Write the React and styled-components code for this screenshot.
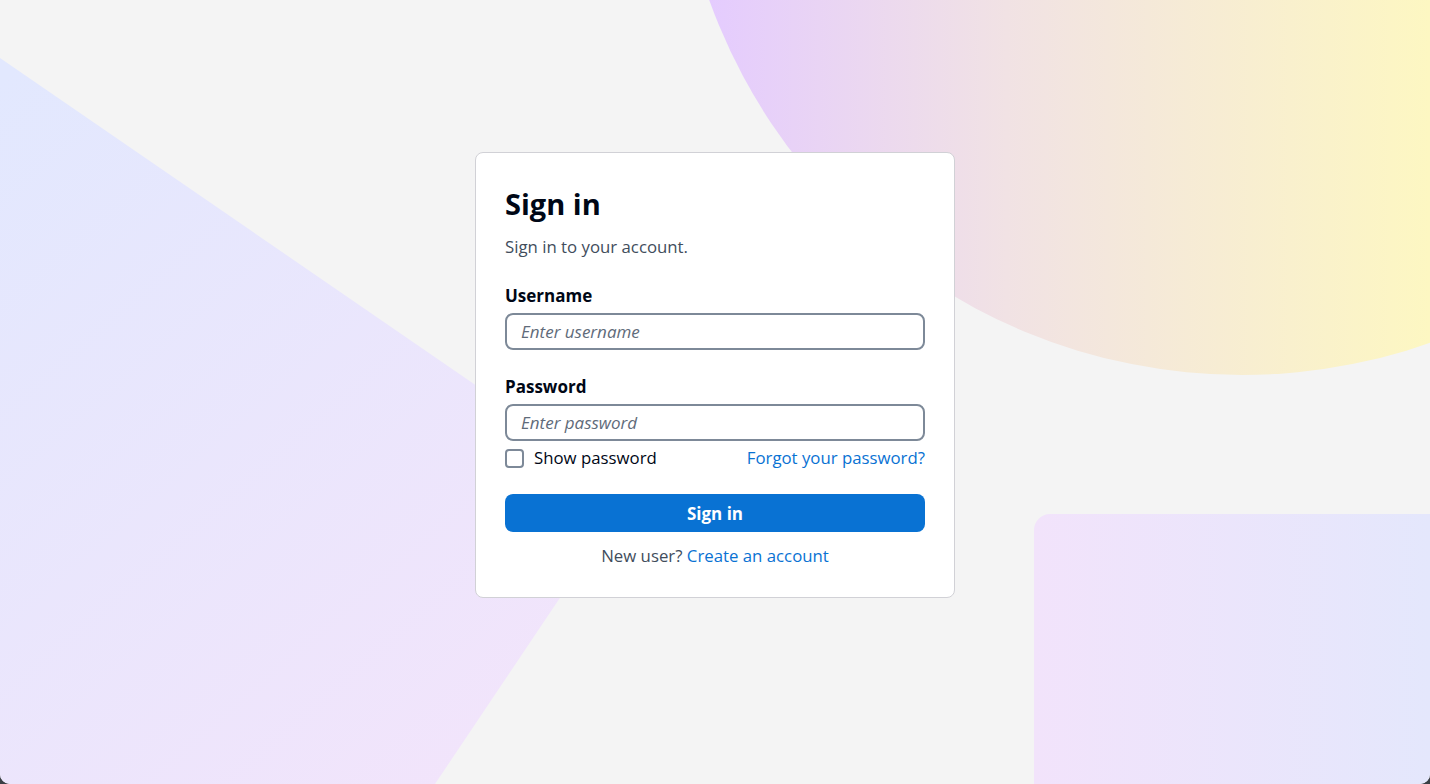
import styled, { createGlobalStyle } from "styled-components";

const GlobalStyle = createGlobalStyle`
  * { box-sizing: border-box; }
  body {
    margin: 0;
    background: #3a3f45;
    font-family: "Open Sans", "Noto Sans", sans-serif;
  }
`;

const Page = styled.div`
  position: relative;
  width: 1430px;
  height: 784px;
  overflow: hidden;
  background: #f4f4f4;
  border-radius: 0 0 10px 10px;
`;

const Backdrop = styled.svg`
  position: absolute;
  inset: 0;
  width: 100%;
  height: 100%;
`;

const Content = styled.main`
  position: relative;
  display: flex;
  justify-content: center;
  padding-top: 152px;
`;

const Card = styled.form`
  width: 480px;
  padding: 33px 29px 29px;
  background: #ffffff;
  border: 1px solid #d1d1d6;
  border-radius: 8px;
  display: flex;
  flex-direction: column;
`;

const Title = styled.h1`
  margin: 0;
  font-size: 29px;
  line-height: 36px;
  font-weight: 700;
  color: #000716;
`;

const Subtitle = styled.p`
  margin: 13px 0 0;
  font-size: 16.8px;
  line-height: 24px;
  color: #414d5c;
`;

const Field = styled.div`
  display: flex;
  flex-direction: column;
  gap: 5px;
  margin-top: ${(p) => p.$top}px;
`;

const Label = styled.label`
  font-size: 17px;
  line-height: 24px;
  font-weight: 700;
  color: #000716;
`;

const Input = styled.input`
  height: 37px;
  width: 100%;
  padding: 0 14px;
  border: 2px solid #7d8998;
  border-radius: 8px;
  font-family: inherit;
  font-size: 17px;
  color: #000716;
  outline: none;

  &::placeholder {
    font-style: italic;
    color: #5f6b7a;
  }
`;

const OptionsRow = styled.div`
  display: flex;
  align-items: center;
  justify-content: space-between;
  margin-top: 5px;
  font-size: 16.8px;
  line-height: 24px;
`;

const CheckLabel = styled.label`
  display: flex;
  align-items: center;
  gap: 10px;
  color: #000716;
`;

const Checkbox = styled.input`
  appearance: none;
  margin: 0;
  width: 19px;
  height: 19px;
  border: 2px solid #7d8998;
  border-radius: 4px;
  background: #fff;
`;

const Link = styled.a`
  color: #0972d3;
  text-decoration: none;
`;

const SubmitButton = styled.button`
  margin-top: 24px;
  height: 38px;
  width: 100%;
  border: none;
  border-radius: 8px;
  background: #0972d3;
  color: #ffffff;
  font-family: inherit;
  font-size: 17px;
  font-weight: 700;
`;

const Footer = styled.p`
  margin: 12px 0 0;
  text-align: center;
  font-size: 16.8px;
  line-height: 24px;
  color: #414d5c;
`;

export default function App() {
  return (
    <>
      <GlobalStyle />
      <Page>
        <Backdrop viewBox="0 0 1430 784" preserveAspectRatio="none">
          <defs>
            <linearGradient id="sun" gradientUnits="userSpaceOnUse" x1="700" y1="0" x2="1430" y2="0">
              <stop offset="0" stopColor="#e4cbff" />
              <stop offset="0.42" stopColor="#f1e2e4" />
              <stop offset="1" stopColor="#fdf7c2" />
            </linearGradient>
            <linearGradient id="wedge" gradientUnits="userSpaceOnUse" x1="0" y1="80" x2="560" y2="720">
              <stop offset="0" stopColor="#e2e8fe" />
              <stop offset="1" stopColor="#f2e4fb" />
            </linearGradient>
            <linearGradient id="tile" gradientUnits="userSpaceOnUse" x1="1034" y1="0" x2="1430" y2="0">
              <stop offset="0" stopColor="#f2e3fb" />
              <stop offset="1" stopColor="#e4e7fc" />
            </linearGradient>
          </defs>
          <circle cx="1242" cy="-191" r="566" fill="url(#sun)" />
          <polygon points="0,58 631,492 435,784 0,784" fill="url(#wedge)" />
          <rect x="1034" y="514" width="440" height="320" rx="16" fill="url(#tile)" />
        </Backdrop>
        <Content>
          <Card onSubmit={(e) => e.preventDefault()}>
            <Title>Sign in</Title>
            <Subtitle>Sign in to your account.</Subtitle>
            <Field $top={25}>
              <Label htmlFor="username">Username</Label>
              <Input id="username" placeholder="Enter username" />
            </Field>
            <Field $top={25}>
              <Label htmlFor="password">Password</Label>
              <Input id="password" type="password" placeholder="Enter password" />
            </Field>
            <OptionsRow>
              <CheckLabel>
                <Checkbox type="checkbox" />
                Show password
              </CheckLabel>
              <Link href="#">Forgot your password?</Link>
            </OptionsRow>
            <SubmitButton type="submit">Sign in</SubmitButton>
            <Footer>
              New user? <Link href="#">Create an account</Link>
            </Footer>
          </Card>
        </Content>
      </Page>
    </>
  );
}
